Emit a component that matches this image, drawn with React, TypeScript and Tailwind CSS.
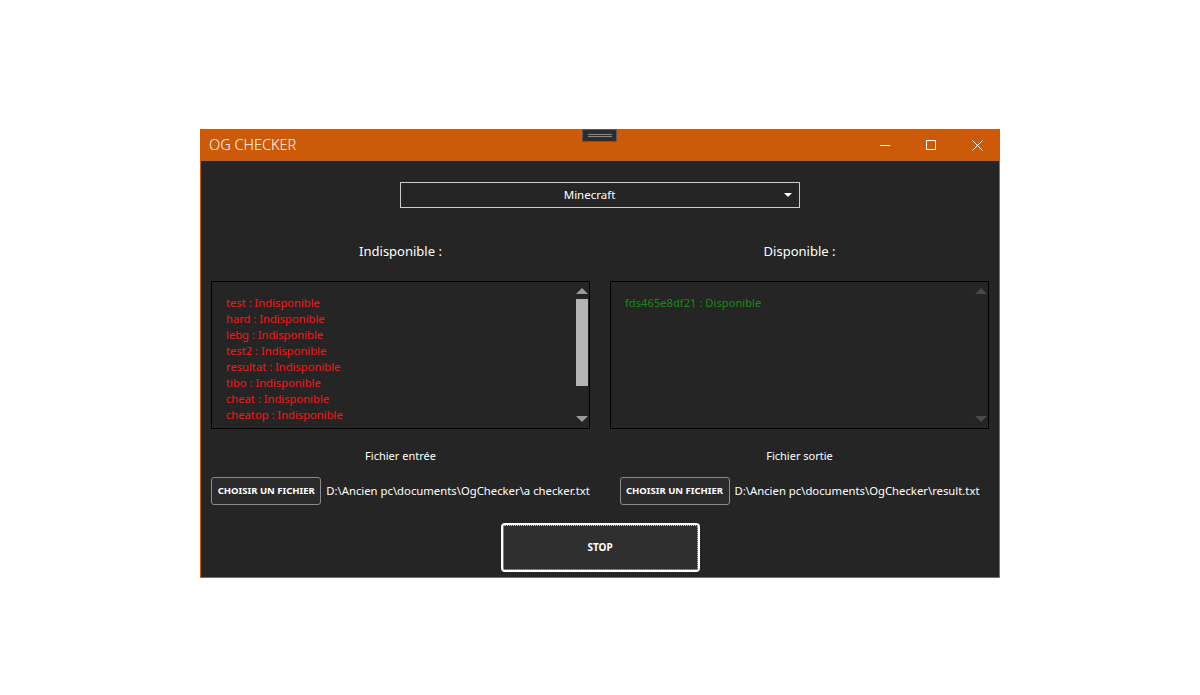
import React from 'react';

const unavailable = ['test', 'hard', 'lebg', 'test2', 'resultat', 'tibo', 'cheat', 'cheatop'];
const available = ['fds465e8df21'];

const font = { fontFamily: '"Noto Sans", "Open Sans", sans-serif' };

const ScrollColumn: React.FC<{ active: boolean }> = ({ active }) => (
  <div className="flex flex-col items-center w-[12px] mr-[1px] pt-[6px] pb-[6px]">
    <div
      className={`w-0 h-0 border-l-[6px] border-r-[6px] border-b-[6px] border-l-transparent border-r-transparent ${
        active ? 'border-b-[#9a9a9a]' : 'border-b-[#4a4a4a]'
      }`}
    />
    {active ? <div className="w-[12px] h-[87px] mt-[5px] bg-[#b4b4b4]" /> : null}
    <div className="flex-1" />
    <div
      className={`w-0 h-0 border-l-[6px] border-r-[6px] border-t-[6px] border-l-transparent border-r-transparent ${
        active ? 'border-t-[#9a9a9a]' : 'border-t-[#4a4a4a]'
      }`}
    />
  </div>
);

const Column: React.FC<{
  title: string;
  lines: string[];
  color: string;
  scroll: boolean;
  label: string;
  path: string;
}> = ({ title, lines, color, scroll, label, path }) => (
  <div className="flex flex-col px-[10px]">
    <div className="h-[20px] mt-[33px] text-center text-[13px] leading-[20px] text-white">{title}</div>
    <div className="flex h-[148px] mt-[20px] border border-black bg-[#252525]">
      <div className="flex-1 pt-[13px] pl-[14px]">
        {lines.map((l) => (
          <div key={l} className={`text-[11.2px] leading-[16px] ${color}`}>
            {l}
          </div>
        ))}
      </div>
      <ScrollColumn active={scroll} />
    </div>
    <div className="mt-[19px] h-[16px] text-center text-[11px] leading-[16px] text-white">{label}</div>
    <div className="mt-[13px] flex items-center justify-center gap-[5px]">
      <button className="shrink-0 whitespace-nowrap h-[28px] w-[110px] rounded-[3px] border border-[#8c8c8c] bg-[#2b2b2b] text-[9.5px] font-bold text-white">
        CHOISIR UN FICHIER
      </button>
      <span className="text-[11.3px] text-white whitespace-nowrap">{path}</span>
    </div>
  </div>
);

export default function App() {
  return (
    <div className="min-h-[695px] bg-white flex justify-center pt-[129px]" style={font}>
      <div className="relative w-[800px] h-[449px] flex flex-col bg-[#cc5a08]">
        {/* drag handle */}
        <div className="absolute left-[382px] top-0 w-[35px] h-[13px] bg-[#2d2d30] border border-[#5a5a5a] flex flex-col items-center justify-center gap-[1px]">
          <div className="w-[24px] h-px bg-[#8a8a8a]" />
          <div className="w-[24px] h-px bg-[#8a8a8a]" />
        </div>

        {/* title bar */}
        <div className="h-[32px] flex items-center">
          <span className="pl-[9px] text-[14.5px] font-light text-white flex-1">OG CHECKER</span>
          <div className="flex h-full">
            <div className="w-[46px] h-full flex items-center justify-center">
              <svg width="10" height="10" viewBox="0 0 10 10">
                <line x1="0" y1="5.5" x2="10" y2="5.5" stroke="white" strokeWidth="1" />
              </svg>
            </div>
            <div className="w-[46px] h-full flex items-center justify-center">
              <svg width="10" height="10" viewBox="0 0 10 10">
                <rect x="0.5" y="0.5" width="9" height="9" fill="none" stroke="white" strokeWidth="1" />
              </svg>
            </div>
            <div className="w-[46px] h-full flex items-center justify-center">
              <svg width="11" height="11" viewBox="0 0 11 11">
                <path d="M0.5 0.5 L10.5 10.5 M10.5 0.5 L0.5 10.5" stroke="white" strokeWidth="1" />
              </svg>
            </div>
          </div>
        </div>

        {/* body */}
        <div className="flex-1 mx-px mb-px bg-[#252525] flex flex-col">
          <div className="mt-[21px] mx-auto w-[400px] h-[26px] border border-[#cdcdcd] flex items-center">
            <span className="flex-1 text-center text-[11.5px] text-white pl-[1px]">Minecraft</span>
            <div className="w-[22px] flex justify-center">
              <div className="w-0 h-0 border-l-[4px] border-r-[4px] border-t-[4px] border-l-transparent border-r-transparent border-t-white" />
            </div>
          </div>

          <div className="grid grid-cols-2">
            <Column
              title="Indisponible :"
              lines={unavailable.map((u) => `${u} : Indisponible`)}
              color="text-[#ff1212]"
              scroll
              label="Fichier entrée"
              path="D:\Ancien pc\documents\OgChecker\a checker.txt"
            />
            <Column
              title="Disponible :"
              lines={available.map((a) => `${a} : Disponible`)}
              color="text-[#138c13]"
              scroll={false}
              label="Fichier sortie"
              path="D:\Ancien pc\documents\OgChecker\result.txt"
            />
          </div>

          <div className="mt-[18px] mx-auto">
            <button className="w-[199px] h-[49px] rounded-[4px] border-2 border-white bg-[#2f2f2f] outline outline-1 outline-dotted outline-[#d0d0d0] outline-offset-[-3px] text-[10px] font-bold text-white">
              STOP
            </button>
          </div>
        </div>
      </div>
    </div>
  );
}
